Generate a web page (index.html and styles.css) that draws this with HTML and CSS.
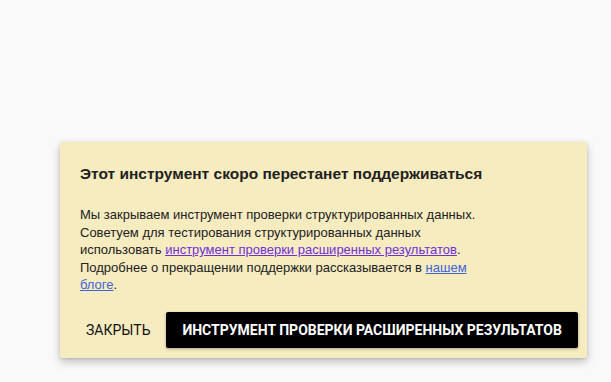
FILE: index.html
```html
<!DOCTYPE html>
<html lang="ru">
<head>
<meta charset="utf-8">
<link rel="stylesheet" href="styles.css">
</head>
<body>
<div class="page">
  <div class="card">
    <h2 class="title">Этот инструмент скоро перестанет поддерживаться</h2>
    <p class="text">Мы закрываем инструмент проверки структурированных данных.<br>Советуем для тестирования структурированных данных<br>использовать <a class="visited" href="#">инструмент проверки расширенных результатов</a>.<br>Подробнее о прекращении поддержки рассказывается в <a class="link" href="#">нашем<br>блоге</a>.</p>
    <div class="actions">
      <button class="btn-text">Закрыть</button>
      <button class="btn-primary">Инструмент проверки расширенных результатов</button>
    </div>
  </div>
</div>
</body>
</html>
```
FILE: styles.css
```css
html, body {
  margin: 0;
  padding: 0;
  background: #f9f9f9;
  height: 100%;
}
.page {
  padding: 142px 0 0 60px;
}
.card {
  box-sizing: border-box;
  width: 527px;
  height: 216px;
  background: #f7ebc0;
  border-radius: 2px;
  box-shadow: 0 4px 10px rgba(0,0,0,0.22), 0 1px 3px rgba(0,0,0,0.12);
  padding: 20px 20px 0 20px;
  font-family: "Liberation Sans", Arial, sans-serif;
  color: #212121;
}
.title {
  margin: 0;
  font-size: 15.5px;
  font-weight: 700;
  line-height: 20px;
  padding-top: 2px;
}
.text {
  margin: 22px 0 0 0;
  font-size: 13px;
  line-height: 17.5px;
}
.visited { color: #7030d8; }
.link { color: #3d63d9; }
.actions {
  display: flex;
  align-items: center;
  margin-top: 18px;
  gap: 10px;
}
.btn-text {
  background: none;
  border: none;
  font-family: Roboto, sans-serif;
  font-size: 14px;
  font-weight: 400;
  text-transform: uppercase;
  color: #111;
  padding: 0 6px;
  height: 36px;
  white-space: nowrap;
}
.btn-primary {
  background: #000;
  color: #fff;
  border: none;
  border-radius: 2px;
  height: 36px;
  padding: 0 16px;
  font-family: Roboto, sans-serif;
  font-size: 14px;
  font-weight: 700;
  text-transform: uppercase;
  white-space: nowrap;
  box-shadow: 0 1px 3px rgba(0,0,0,0.3);
}
```
